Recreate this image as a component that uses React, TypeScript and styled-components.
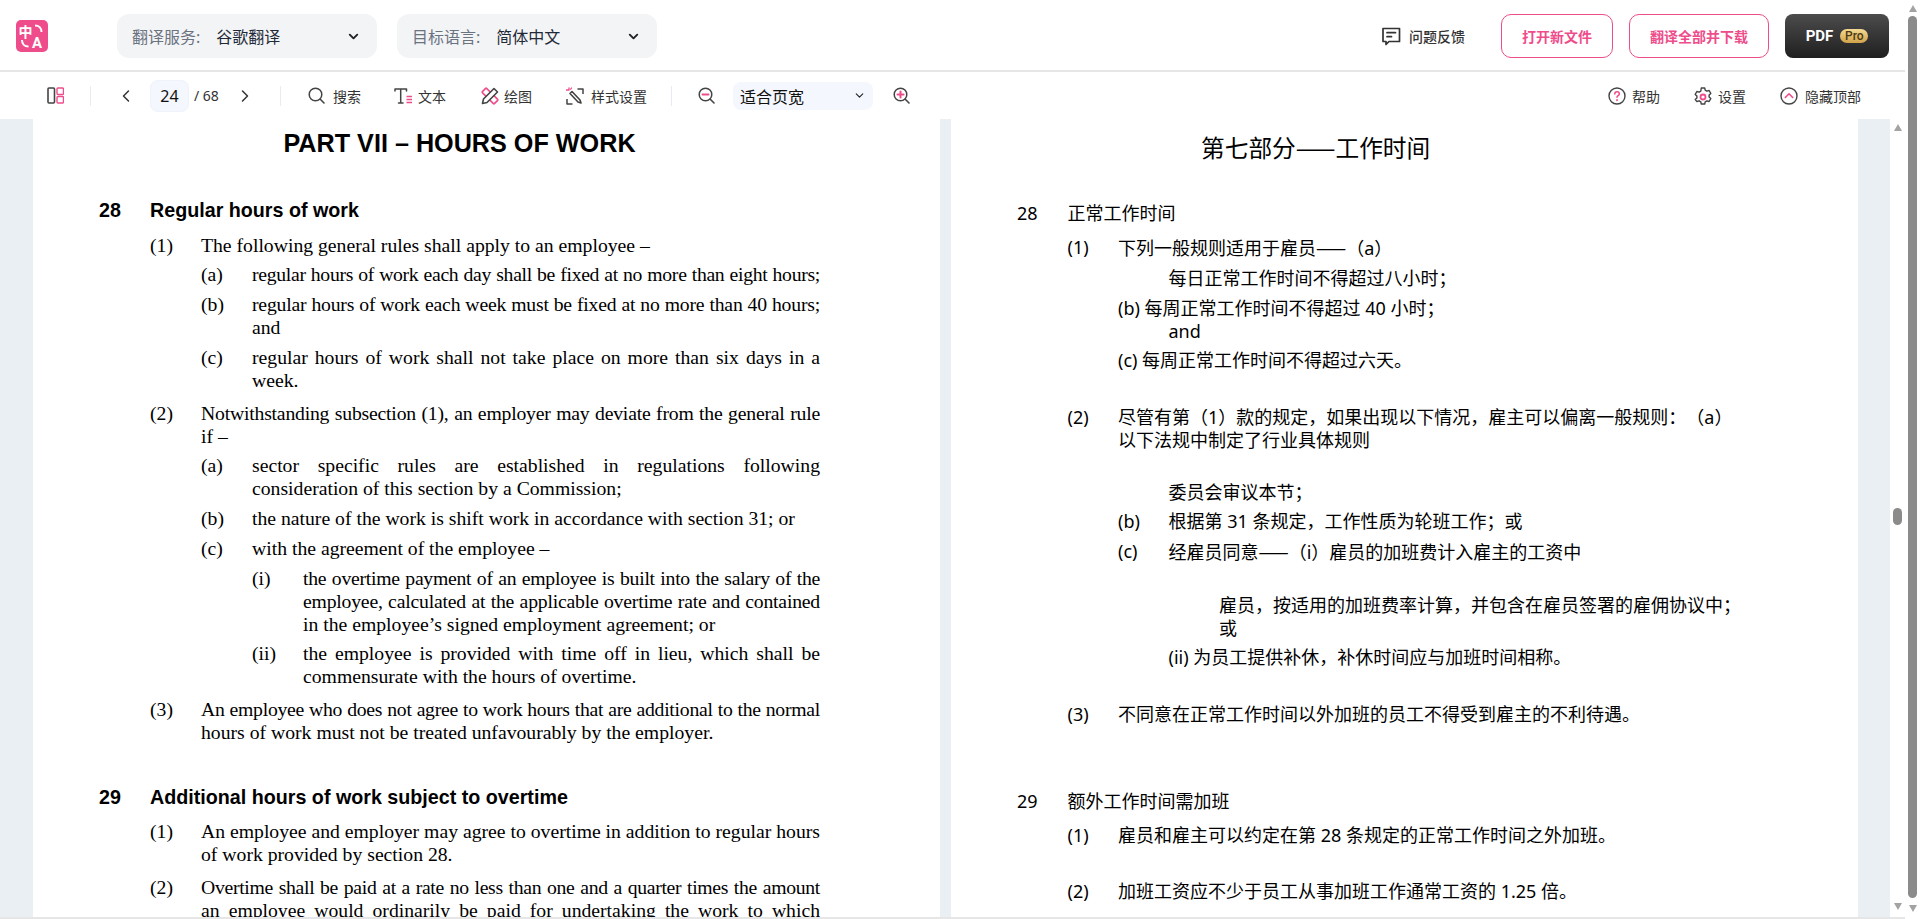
import styled, { createGlobalStyle } from "styled-components"
import { ChevronDown, ChevronLeft, ChevronRight } from "lucide-react"

const PINK = "#ee4c8a"
const DARK = "#444"
const CJK = `"Noto Sans", "Noto Sans CJK SC", sans-serif`

const GlobalStyle = createGlobalStyle`
  html, body { margin: 0; height: 100%; overflow: hidden; background: #fff; }
  * { box-sizing: border-box; }
  #root { height: 100%; font-family: ${CJK}; color: #333; }
`

const Shell = styled.div`
  display: flex;
  height: 919px;
`
const Main = styled.div`
  flex: 1;
  min-width: 0;
  display: flex;
  flex-direction: column;
`

/* top bar */
const Header = styled.header`
  height: 72px;
  flex: none;
  display: flex;
  align-items: center;
  padding: 2px 16px 0 16px;
  border-bottom: 2px solid #e6e6e6;
`
const LogoBox = styled.svg`
  width: 32px;
  height: 32px;
  flex: none;
  margin-right: 69px;
`
const Dropdown = styled.div`
  width: 260px;
  height: 44px;
  margin-right: 20px;
  padding: 0 16px 0 15px;
  display: flex;
  align-items: center;
  border-radius: 12px;
  background: #f3f4f6;
  font-size: 16px;
  color: #1f2937;
`
const DropLabel = styled.span`
  color: #6b7280;
  margin-right: 16px;
`
const DropValue = styled.span`
  flex: 1;
`
const HeaderRight = styled.div`
  margin-left: auto;
  display: flex;
  align-items: center;
  gap: 16px;
`
const Feedback = styled.div`
  display: flex;
  align-items: center;
  gap: 8px;
  margin-right: 20px;
  font-size: 14px;
  font-weight: 500;
  color: #333;
`
const OutlineButton = styled.button<{ $w: number }>`
  width: ${(p) => p.$w}px;
  height: 44px;
  padding: 0;
  border: 1px solid ${PINK};
  border-radius: 10px;
  background: #fff;
  color: ${PINK};
  font-family: ${CJK};
  font-size: 14px;
  font-weight: 600;
`
const PdfButton = styled.button`
  width: 104px;
  height: 44px;
  padding: 0;
  border: 0;
  border-radius: 8px;
  background: linear-gradient(180deg, #4c4c4c, #1f1f1f);
  color: #fff;
  font-family: "Roboto", sans-serif;
  font-size: 15px;
  font-weight: 700;
  display: flex;
  align-items: center;
  justify-content: center;
  gap: 7px;
`
const ProBadge = styled.span`
  width: 28px;
  height: 14px;
  border-radius: 7px;
  background: linear-gradient(180deg, #f5da92, #d0a24a);
  color: #4a3a12;
  font-size: 12px;
  font-weight: 500;
  line-height: 14px;
  text-align: center;
`

/* second bar */
const Toolbar = styled.div`
  height: 47px;
  flex: none;
  display: flex;
  align-items: center;
  padding: 0 44px 0 47px;
`
const Separator = styled.span<{ $l: number; $r: number }>`
  width: 1px;
  height: 20px;
  margin: 0 ${(p) => p.$r}px 0 ${(p) => p.$l}px;
  background: #e9ebf1;
`
const NavArrow = styled.span<{ $l: number; $r: number }>`
  display: flex;
  margin: 0 ${(p) => p.$r}px 0 ${(p) => p.$l}px;
  color: #333;
`
const PageInput = styled.span`
  width: 39px;
  height: 32px;
  border: 1px solid #eef2fb;
  border-radius: 8px;
  background: #f4f7fd;
  font-size: 16px;
  line-height: 30px;
  text-align: center;
  color: #111;
`
const PageTotal = styled.span`
  width: 24px;
  margin-left: 5px;
  font-size: 14px;
  white-space: nowrap;
  color: #333;
`
const Tool = styled.div<{ $r?: number; $gap?: number }>`
  display: flex;
  align-items: center;
  gap: ${(p) => p.$gap ?? 8}px;
  margin-right: ${(p) => p.$r ?? 0}px;
  font-size: 14px;
  color: #333;
`
const ZoomSelect = styled.div`
  width: 140px;
  height: 28px;
  margin: 0 20px 0 18px;
  padding: 0 7px;
  display: flex;
  align-items: center;
  justify-content: space-between;
  border-radius: 8px;
  background: #f4f7fd;
  font-size: 16px;
  color: #111;
`
const ToolbarRight = styled.div`
  margin-left: auto;
  display: flex;
  align-items: center;
`

/* document */
const DocArea = styled.div`
  flex: 1;
  min-height: 0;
  display: flex;
  overflow: hidden;
`
const Viewer = styled.div`
  width: 1890px;
  flex: none;
  padding-left: 33px;
  display: flex;
  gap: 11px;
  background: #e9eff2;
`
const Page = styled.div`
  width: 907px;
  flex: none;
  padding-left: 66px;
  background: #fff;
  color: #000;
  overflow: hidden;
`
const Row = styled.div<{ $indent?: number; $top?: number }>`
  display: flex;
  margin-left: calc(var(--step) * ${(p) => p.$indent ?? 0});
  margin-top: ${(p) => p.$top ?? 0}px;
  line-height: 23px;
`
const Label = styled.span`
  width: var(--step);
  flex: none;
`
const Body = styled.div`
  flex: 1;
  min-width: 0;
`
const Line = styled.div<{ $just?: boolean; $ls?: number }>`
  white-space: nowrap;
  letter-spacing: ${(p) => p.$ls ?? 0}px;
  text-align: ${(p) => (p.$just ? "justify" : "left")};
  text-align-last: ${(p) => (p.$just ? "justify" : "left")};
`
const SourceText = styled.div`
  --step: 51px;
  width: 721px;
  font-family: "Liberation Serif", serif;
  font-size: 19.7px;
`
const SourceTitle = styled.h1`
  margin: 10px 0 0;
  font-family: "Liberation Sans", sans-serif;
  font-size: 25.2px;
  font-weight: 700;
  line-height: 28px;
  text-align: center;
`
const SourceHeading = styled(Row)`
  font-family: "Liberation Sans", sans-serif;
  font-size: 19.7px;
  font-weight: 700;
`
const TargetText = styled.div`
  --step: 50.5px;
  width: 780px;
  font-family: ${CJK};
  font-size: 18px;
  font-weight: 400;
  text-spacing-trim: space-all;
`
const TargetTitle = styled.h1`
  margin: 12px 0 0 184px;
  font-size: 23.7px;
  font-weight: 400;
  line-height: 32px;
`
const TargetHeading = styled(Row)`
  font-size: 18px;
`
const Dash = styled.span`
  font-family: "Noto Sans CJK SC", sans-serif;
`

const Scrollbar = styled.div`
  width: 15px;
  flex: none;
  display: flex;
  flex-direction: column;
  align-items: center;
  background: #fff;
`
const ArrowUp = styled.span`
  flex: none;
  margin-top: 5px;
  border: 4px solid transparent;
  border-top: 0;
  border-bottom: 7px solid #a3a3a3;
`
const ArrowDown = styled.span`
  flex: none;
  margin-bottom: 7px;
  border: 4px solid transparent;
  border-bottom: 0;
  border-top: 7px solid #a3a3a3;
`
const Track = styled.div<{ $top: number; $bottom: number }>`
  flex: 1;
  width: 9px;
  display: flex;
  padding: ${(p) => p.$top}px 0 ${(p) => p.$bottom}px;
`
const Thumb = styled.div`
  flex: 1;
  border-radius: 5px;
  background: #8b8b8b;
`
const InnerThumb = styled(Thumb)`
  flex: none;
  width: 100%;
  height: 17px;
`
const FootShade = styled.div`
  height: 2px;
  flex: none;
  background: #e6e6e6;
`

const Logo = () => (
  <LogoBox viewBox="0 0 32 32">
    <rect width="32" height="32" rx="5" fill={PINK} />
    <text x="2.5" y="17" fontSize="14" fontWeight="700" fill="#fff" fontFamily={CJK}>
      中
    </text>
    <text x="16" y="28" fontSize="15" fontWeight="700" fill="#fff" fontFamily="Roboto, sans-serif">
      A
    </text>
    <path d="M19 5.5c3.8 0 6.5 2.6 6.5 6.5M6 20c0 4 2.6 6.5 6.5 6.5" fill="none" stroke="#fff" strokeWidth="2" />
  </LogoBox>
)

const Icon = ({ size = 18, w, children }: { size?: number; w?: number; children: React.ReactNode }) => (
  <svg width={w ?? size} height={size} viewBox={`0 0 ${w ?? size} ${size}`} fill="none" strokeLinecap="round" strokeLinejoin="round">
    {children}
  </svg>
)

const FeedbackIcon = () => (
  <Icon size={20}>
    <path d="M2 2.500h16.500v13H8l-3 3v-3H2z" stroke="#333" strokeWidth="1.7" />
    <path d="M6 6.700h8.500M6 10.700h4.500" stroke="#333" strokeWidth="1.7" />
  </Icon>
)
const LayoutIcon = () => (
  <Icon size={17}>
    <rect x="1" y="1" width="6.500" height="15" rx="1" stroke={DARK} strokeWidth="1.6" />
    <rect x="10" y="1" width="6.500" height="6.500" rx="1" stroke={PINK} strokeWidth="1.4" />
    <rect x="10" y="9.500" width="6.500" height="6.500" rx="1" stroke={PINK} strokeWidth="1.4" />
  </Icon>
)
const SearchIcon = () => (
  <Icon size={17}>
    <circle cx="7.500" cy="7.500" r="6.300" stroke={DARK} strokeWidth="1.5" />
    <path d="M12.300 12.300l3.700 3.700" stroke={DARK} strokeWidth="1.6" />
  </Icon>
)
const TextIcon = () => (
  <Icon size={18} w={19}>
    <path d="M1 4V2h11.500v2M6.700 2v14M4.500 16h4.500" stroke={DARK} strokeWidth="1.5" />
    <path d="M12.500 9.500h5.500M12.500 12.500h5.500M12.500 15.500h5.500" stroke={PINK} strokeWidth="1.7" strokeLinecap="butt" />
  </Icon>
)
const DrawIcon = () => (
  <Icon size={18}>
    <rect x="0.500" y="6" width="17" height="6" rx="1" transform="rotate(45 9 9)" stroke={PINK} strokeWidth="1.6" />
    <path d="M13 1.500l3.500 3.500L6 15.500 1.500 16.500l1-4.500z" fill="#fff" stroke={DARK} strokeWidth="1.6" />
  </Icon>
)
const StyleIcon = () => (
  <Icon size={18}>
    <path d="M11.500 2H17v5M1 12v5h5.500" stroke={DARK} strokeWidth="1.5" strokeLinecap="butt" />
    <path d="M6 4.500L4 6.500 12 15l3 1-1-3z" stroke={DARK} strokeWidth="1.6" />
    <path d="M3 .8v2.400M.5 3h2M5.500 1l-.8 1.200" stroke={PINK} strokeWidth="1.3" />
  </Icon>
)
const ZoomIcon = ({ plus }: { plus?: boolean }) => (
  <Icon size={17}>
    <circle cx="7.500" cy="7.500" r="6.300" stroke={DARK} strokeWidth="1.5" />
    <path d="M12.300 12.300l3.700 3.700" stroke={DARK} strokeWidth="1.6" />
    <path d="M4.500 7.500h6" stroke={PINK} strokeWidth="2" />
    {plus && <path d="M7.500 4.500v6" stroke={PINK} strokeWidth="2" />}
  </Icon>
)
const HelpIcon = () => (
  <Icon size={18}>
    <circle cx="9" cy="9" r="8" stroke={DARK} strokeWidth="1.4" />
    <path d="M6.800 7c0-1.300 1-2.200 2.300-2.200S11.300 5.700 11.300 7c0 1.600-2.300 1.700-2.300 3.300" stroke={PINK} strokeWidth="1.5" />
    <path d="M9 13v.3" stroke={PINK} strokeWidth="1.8" />
  </Icon>
)
const GearIcon = () => (
  <Icon size={18}>
    <path
      d="M7.300 1h3.400l.5 2.200 1.700 1 2.200-.7 1.700 2.900-1.700 1.600v2l1.700 1.600-1.700 2.900-2.200-.7-1.700 1-.5 2.200H7.300l-.5-2.200-1.700-1-2.200.7L1.200 12.600 2.900 11V9L1.200 7.400l1.700-2.900 2.200.7 1.700-1z"
      stroke={DARK}
      strokeWidth="1.4"
    />
    <circle cx="9" cy="10" r="2.500" stroke={PINK} strokeWidth="1.800" />
  </Icon>
)
const HideIcon = () => (
  <Icon size={18}>
    <circle cx="9" cy="9" r="8" stroke={DARK} strokeWidth="1.4" />
    <path d="M5.300 10.500L9 6.800l3.700 3.700" stroke={PINK} strokeWidth="1.600" />
  </Icon>
)

const SourcePage = () => (
  <Page>
    <SourceText>
      <SourceTitle>PART VII – HOURS OF WORK</SourceTitle>
      <SourceHeading $top={42}>
        <Label>28</Label>
        <Body>Regular hours of work</Body>
      </SourceHeading>
      <Row $indent={1} $top={12}>
        <Label>(1)</Label>
        <Body>The following general rules shall apply to an employee –</Body>
      </Row>
      <Row $indent={2} $top={6}>
        <Label>(a)</Label>
        <Body>
          <Line $just $ls={-0.3}>regular hours of work each day shall be fixed at no more than eight hours;</Line>
        </Body>
      </Row>
      <Row $indent={2} $top={7}>
        <Label>(b)</Label>
        <Body>
          <Line $just $ls={-0.2}>regular hours of work each week must be fixed at no more than 40 hours;</Line>
          <Line>and</Line>
        </Body>
      </Row>
      <Row $indent={2} $top={7}>
        <Label>(c)</Label>
        <Body>
          <Line $just>regular hours of work shall not take place on more than six days in a</Line>
          <Line>week.</Line>
        </Body>
      </Row>
      <Row $indent={1} $top={10}>
        <Label>(2)</Label>
        <Body>
          <Line $just $ls={-0.2}>Notwithstanding subsection (1), an employer may deviate from the general rule</Line>
          <Line>if –</Line>
        </Body>
      </Row>
      <Row $indent={2} $top={6}>
        <Label>(a)</Label>
        <Body>
          <Line $just>sector specific rules are established in regulations following</Line>
          <Line>consideration of this section by a Commission;</Line>
        </Body>
      </Row>
      <Row $indent={2} $top={7}>
        <Label>(b)</Label>
        <Body>the nature of the work is shift work in accordance with section 31; or</Body>
      </Row>
      <Row $indent={2} $top={7}>
        <Label>(c)</Label>
        <Body>with the agreement of the employee –</Body>
      </Row>
      <Row $indent={3} $top={7}>
        <Label>(i)</Label>
        <Body>
          <Line $just $ls={-0.25}>the overtime payment of an employee is built into the salary of the</Line>
          <Line $just $ls={-0.2}>employee, calculated at the applicable overtime rate and contained</Line>
          <Line>in the employee’s signed employment agreement; or</Line>
        </Body>
      </Row>
      <Row $indent={3} $top={6}>
        <Label>(ii)</Label>
        <Body>
          <Line $just>the employee is provided with time off in lieu, which shall be</Line>
          <Line>commensurate with the hours of overtime.</Line>
        </Body>
      </Row>
      <Row $indent={1} $top={10}>
        <Label>(3)</Label>
        <Body>
          <Line $just $ls={-0.25}>An employee who does not agree to work hours that are additional to the normal</Line>
          <Line>hours of work must not be treated unfavourably by the employer.</Line>
        </Body>
      </Row>
      <SourceHeading $top={42}>
        <Label>29</Label>
        <Body>Additional hours of work subject to overtime</Body>
      </SourceHeading>
      <Row $indent={1} $top={11}>
        <Label>(1)</Label>
        <Body>
          <Line $just>An employee and employer may agree to overtime in addition to regular hours</Line>
          <Line>of work provided by section 28.</Line>
        </Body>
      </Row>
      <Row $indent={1} $top={10}>
        <Label>(2)</Label>
        <Body>
          <Line $just $ls={-0.3}>Overtime shall be paid at a rate no less than one and a quarter times the amount</Line>
          <Line $just>an employee would ordinarily be paid for undertaking the work to which</Line>
        </Body>
      </Row>
    </SourceText>
  </Page>
)

const TargetPage = () => (
  <Page>
    <TargetText>
      <TargetTitle>第七部分<Dash>——</Dash>工作时间</TargetTitle>
      <TargetHeading $top={38}>
        <Label>28</Label>
        <Body>正常工作时间</Body>
      </TargetHeading>
      <Row $indent={1} $top={11}>
        <Label>(1)</Label>
        <Body>下列一般规则适用于雇员<Dash>——</Dash>（a）</Body>
      </Row>
      <Row $indent={3} $top={7}>每日正常工作时间不得超过八小时；</Row>
      <Row $indent={2} $top={7}>(b) 每周正常工作时间不得超过 40 小时；</Row>
      <Row $indent={3}>and</Row>
      <Row $indent={2} $top={6}>(c) 每周正常工作时间不得超过六天。</Row>
      <Row $indent={1} $top={34}>
        <Label>(2)</Label>
        <Body>
          <Line>尽管有第（1）款的规定，如果出现以下情况，雇主可以偏离一般规则：（a）</Line>
          <Line>以下法规中制定了行业具体规则</Line>
        </Body>
      </Row>
      <Row $indent={3} $top={29}>委员会审议本节；</Row>
      <Row $indent={2} $top={6}>
        <Label>(b)</Label>
        <Body>根据第 31 条规定，工作性质为轮班工作；或</Body>
      </Row>
      <Row $indent={2} $top={7}>
        <Label>(c)</Label>
        <Body>经雇员同意<Dash>——</Dash>（i）雇员的加班费计入雇主的工资中</Body>
      </Row>
      <Row $indent={4} $top={30}>雇员，按适用的加班费率计算，并包含在雇员签署的雇佣协议中；</Row>
      <Row $indent={4}>或</Row>
      <Row $indent={3} $top={6}>(ii) 为员工提供补休，补休时间应与加班时间相称。</Row>
      <Row $indent={1} $top={34}>
        <Label>(3)</Label>
        <Body>不同意在正常工作时间以外加班的员工不得受到雇主的不利待遇。</Body>
      </Row>
      <TargetHeading $top={64}>
        <Label>29</Label>
        <Body>额外工作时间需加班</Body>
      </TargetHeading>
      <Row $indent={1} $top={11}>
        <Label>(1)</Label>
        <Body>雇员和雇主可以约定在第 28 条规定的正常工作时间之外加班。</Body>
      </Row>
      <Row $indent={1} $top={33}>
        <Label>(2)</Label>
        <Body>加班工资应不少于员工从事加班工作通常工资的 1.25 倍。</Body>
      </Row>
    </TargetText>
  </Page>
)

export default function App() {
  return (
    <>
      <GlobalStyle />
      <Shell>
        <Main>
          <Header>
            <Logo />
            <Dropdown>
              <DropLabel>翻译服务:</DropLabel>
              <DropValue>谷歌翻译</DropValue>
              <ChevronDown size={15} strokeWidth={3} color="#222" />
            </Dropdown>
            <Dropdown>
              <DropLabel>目标语言:</DropLabel>
              <DropValue>简体中文</DropValue>
              <ChevronDown size={15} strokeWidth={3} color="#222" />
            </Dropdown>
            <HeaderRight>
              <Feedback>
                <FeedbackIcon />
                问题反馈
              </Feedback>
              <OutlineButton $w={112}>打开新文件</OutlineButton>
              <OutlineButton $w={140}>翻译全部并下载</OutlineButton>
              <PdfButton>
                PDF
                <ProBadge>Pro</ProBadge>
              </PdfButton>
            </HeaderRight>
          </Header>
          <Toolbar>
            <LayoutIcon />
            <Separator $l={26} $r={0} />
            <NavArrow $l={25} $r={14}>
              <ChevronLeft size={20} strokeWidth={1.8} />
            </NavArrow>
            <PageInput>24</PageInput>
            <PageTotal>/ 68</PageTotal>
            <NavArrow $l={17} $r={25}>
              <ChevronRight size={20} strokeWidth={1.8} />
            </NavArrow>
            <Separator $l={0} $r={27} />
            <Tool $r={33}>
              <SearchIcon />
              搜索
            </Tool>
            <Tool $r={35} $gap={5}>
              <TextIcon />
              文本
            </Tool>
            <Tool $r={34} $gap={5}>
              <DrawIcon />
              绘图
            </Tool>
            <Tool $gap={7}>
              <StyleIcon />
              样式设置
            </Tool>
            <Separator $l={24} $r={26} />
            <ZoomIcon />
            <ZoomSelect>
              适合页宽
              <ChevronDown size={13} strokeWidth={2} color="#222" />
            </ZoomSelect>
            <ZoomIcon plus />
            <ToolbarRight>
              <Tool $r={34} $gap={6}>
                <HelpIcon />
                帮助
              </Tool>
              <Tool $r={34} $gap={6}>
                <GearIcon />
                设置
              </Tool>
              <Tool $gap={7}>
                <HideIcon />
                隐藏顶部
              </Tool>
            </ToolbarRight>
          </Toolbar>
          <DocArea>
            <Viewer>
              <SourcePage />
              <TargetPage />
            </Viewer>
            <Scrollbar>
              <ArrowUp />
              <Track $top={377} $bottom={0}>
                <InnerThumb />
              </Track>
              <ArrowDown />
            </Scrollbar>
          </DocArea>
          <FootShade />
        </Main>
        <Scrollbar>
          <ArrowUp />
          <Track $top={4} $bottom={7}>
            <Thumb />
          </Track>
          <ArrowDown />
        </Scrollbar>
      </Shell>
    </>
  )
}
